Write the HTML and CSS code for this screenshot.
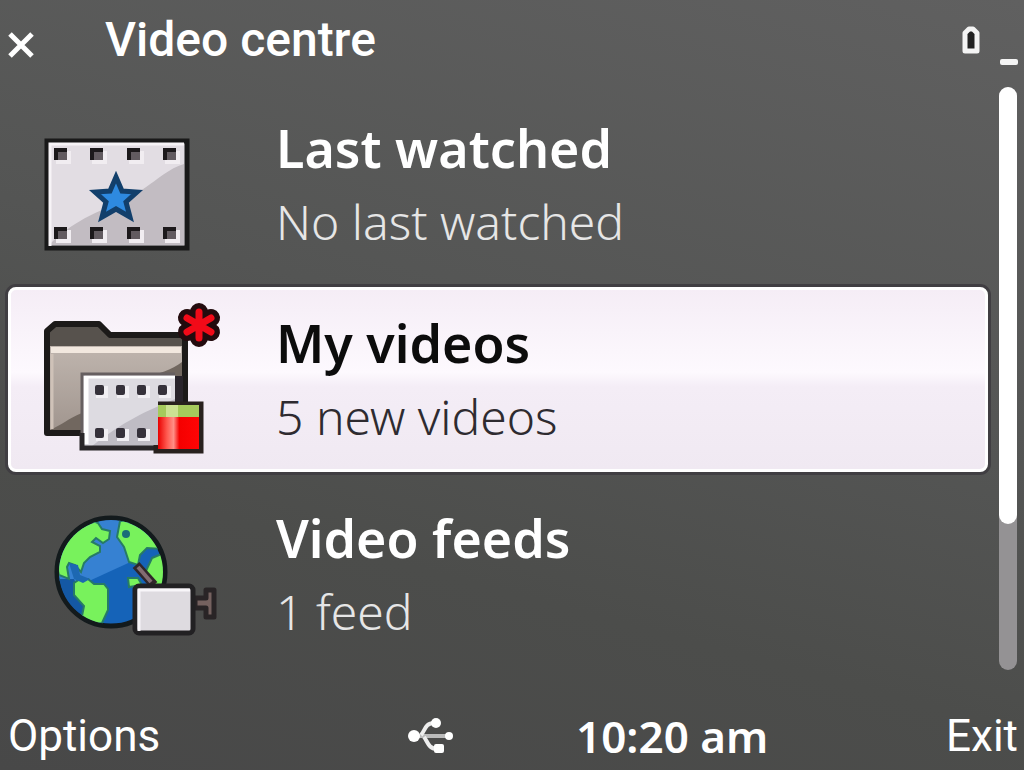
FILE: index.html
```html
<!DOCTYPE html>
<html lang="en">
<head>
  <meta charset="UTF-8" />
  <meta name="viewport" content="width=device-width, initial-scale=1.0"/>
  <title>Video centre</title>
  <link rel="stylesheet" href="styles.css">
</head>
<body>

<header class="title-bar">
  <button type="button" class="close" aria-label="Close">
    <svg width="28" height="28" viewBox="0 0 28 28"><path d="M3 3L25 25M25 3L3 25" stroke="#fff" stroke-width="5"/></svg>
  </button>
  <h1>Video centre</h1>
  <svg class="battery" width="18" height="28" viewBox="0 0 18 28">
    <path d="M7 3H11L15 7V25H3V7Z" fill="#222" stroke="#f4f4f4" stroke-width="5" stroke-linejoin="round"/>
  </svg>
  <span class="level"></span>
</header>

<main class="content">
  <nav class="list">
    <!-- Last watched -->
    <a href="#last-watched" class="item">
      <svg class="icon" viewBox="0 0 180 160">
        <rect x="3" y="36" width="140" height="107" fill="#e2dde3" stroke="#191919" stroke-width="5"/>
        <path d="M6 139C32 113 60 105 84 93S120 65 140 59V140H6Z" fill="#c2bcc2"/>
        <path d="M6 141V39H140" fill="none" stroke="#f7f4f7" stroke-width="3"/>
        <g fill="#f1edf1">
          <rect x="12" y="46" width="15" height="13"/><rect x="48" y="46" width="15" height="13"/>
          <rect x="85" y="46" width="15" height="13"/><rect x="121" y="46" width="15" height="13"/>
          <rect x="12" y="125" width="15" height="13"/><rect x="48" y="125" width="15" height="13"/>
          <rect x="85" y="125" width="15" height="13"/><rect x="121" y="125" width="15" height="13"/>
        </g>
        <g fill="#625b60">
          <rect x="10" y="43" width="13" height="12"/><rect x="46" y="43" width="13" height="12"/>
          <rect x="83" y="43" width="13" height="12"/><rect x="119" y="43" width="13" height="12"/>
          <rect x="10" y="122" width="13" height="12"/><rect x="46" y="122" width="13" height="12"/>
          <rect x="83" y="122" width="13" height="12"/><rect x="119" y="122" width="13" height="12"/>
        </g>
        <g fill="none" stroke="#1c191b" stroke-width="4">
          <path d="M12 55V45H23"/><path d="M48 55V45H59"/><path d="M85 55V45H96"/><path d="M121 55V45H132"/>
          <path d="M12 134V124H23"/><path d="M48 134V124H59"/><path d="M85 134V124H96"/><path d="M121 134V124H132"/>
        </g>
        <path d="M72 72L78 86L93 87L82 97L86 112L72 104L58 112L62 97L51 87L66 86Z" fill="#2e8ae0" stroke="#123f6b" stroke-width="5"/>
      </svg>
      <span class="text">
        <span class="name">Last watched</span>
        <span class="detail">No last watched</span>
      </span>
    </a>

    <!-- My videos -->
    <a href="#my-videos" class="item selected">
      <svg class="icon" viewBox="0 0 180 160">
        <defs>
          <linearGradient id="folder" x1="0" y1="0" x2="0" y2="1">
            <stop offset="0" stop-color="#bfb5ae"/><stop offset="1" stop-color="#a1968f"/>
          </linearGradient>
          <linearGradient id="can" x1="0" y1="0" x2="1" y2="0">
            <stop offset="0" stop-color="#e80000"/><stop offset=".22" stop-color="#ff5a50"/>
            <stop offset=".38" stop-color="#ff8f86"/><stop offset=".52" stop-color="#f50000"/>
            <stop offset="1" stop-color="#ff0505"/>
          </linearGradient>
        </defs>
        <path d="M3 133V31L11 24H55L66 35H141V133Z" fill="#57524d" stroke="#1c1a19" stroke-width="6" stroke-linejoin="round"/>
        <path d="M6 46H138V78L124 80V130H6Z" fill="url(#folder)"/>
        <path d="M6 130C16 126 25 118 38 113V130Z" fill="#71675f"/>
        <path d="M138 62C128 70 114 74 98 78H138Z" fill="#71675f"/>
        <path d="M7 50H137" stroke="#f2e8df" stroke-width="6"/>
        <path d="M8 54V129" stroke="#cfc2b8" stroke-width="3"/>
        <path d="M39 75H131V148H39Z" fill="#dddbe1"/>
        <path d="M48 146C80 121 102 111 131 99V146H48Z" fill="#bfbcc4"/>
        <path d="M42 76V144" stroke="#fff" stroke-width="5"/>
        <path d="M41 77H131" stroke="#fff" stroke-width="3"/>
        <path d="M38 146V74H131" fill="none" stroke="#665f60" stroke-width="3"/>
        <path d="M38 133V148H118" fill="none" stroke="#292628" stroke-width="5"/>
        <path d="M135 76V106" stroke="#29242b" stroke-width="8"/>
        <g fill="#f1eff3">
          <rect x="52" y="86" width="12" height="12"/><rect x="73" y="86" width="12" height="12"/>
          <rect x="94" y="86" width="12" height="12"/><rect x="115" y="86" width="12" height="12"/>
          <rect x="52" y="129" width="12" height="12"/><rect x="73" y="129" width="12" height="12"/>
          <rect x="94" y="129" width="12" height="12"/>
        </g>
        <g fill="#35313a">
          <rect x="51" y="85" width="9" height="10" rx="2"/><rect x="72" y="85" width="9" height="10" rx="2"/>
          <rect x="93" y="85" width="9" height="10" rx="2"/><rect x="114" y="85" width="9" height="10" rx="2"/>
          <rect x="51" y="128" width="9" height="10" rx="2"/><rect x="72" y="128" width="9" height="10" rx="2"/>
          <rect x="93" y="128" width="9" height="10" rx="2"/>
        </g>
        <path d="M114 104H157V151H112V145" fill="none" stroke="#28211e" stroke-width="5"/>
        <rect x="114" y="105" width="41" height="12" fill="#a5ca5c"/>
        <rect x="122" y="105" width="12" height="12" fill="#cbe292"/>
        <rect x="114" y="117" width="41" height="32" fill="url(#can)"/>
        <g fill="none" stroke-linecap="round">
          <path d="M155 12V38M143 18L167 32M167 18L143 32" stroke="#230b0e" stroke-width="18"/>
          <path d="M155 12V38M143 18L167 32M167 18L143 32" stroke="#f20a18" stroke-width="7"/>
        </g>
      </svg>
      <span class="text">
        <span class="name">My videos</span>
        <span class="detail">5 new videos</span>
      </span>
    </a>

    <!-- Video feeds -->
    <a href="#video-feeds" class="item">
      <svg class="icon" viewBox="0 0 180 160">
        <defs>
          <clipPath id="globe"><circle cx="67" cy="77" r="52"/></clipPath>
        </defs>
        <circle cx="67" cy="77" r="54" fill="#1563b8" stroke="#131a1c" stroke-width="5"/>
        <g clip-path="url(#globe)">
          <path d="M10 86H45L93 64L130 10H10Z" fill="#3681d2"/>
          <path d="M10 84H30L42 110L38 135H10Z" fill="#1458a4"/>
          <g fill="#78f25c" stroke="#277b65" stroke-width="2">
            <path d="M44 24L54 28L58 34L66 36L65 44L59 48L52 43L48 47L56 51V57L46 62L40 68L37 77L31 70L25 68L23 72L25 84L15 80L10 60L24 34Z"/>
            <path d="M30 88L36 84H44L50 89H60L64 94V115L58 128L46 129L38 121L40 111L30 100Z"/>
            <path d="M76 26H92L106 36L120 54L103 53L96 60L94 70L85 67L80 52L73 42Z"/>
            <path d="M108 63L120 58L122 84L117 95L107 88L101 78Z"/>
            <path d="M84 83H94L98 90L85 92Z"/>
          </g>
          <path d="M25 68L34 70L36 80L46 84L39 88L30 84Z" fill="#1d68b2"/>
          <circle cx="82" cy="39" r="4" fill="#1a6c78"/>
        </g>
        <path d="M92 70L110 90" stroke="#30262a" stroke-width="9"/>
        <path d="M94 72L107 87" stroke="#826c72" stroke-width="4"/>
        <path d="M151 103H162V95H170V122H162V113H151Z" fill="#75615f" stroke="#292426" stroke-width="5" stroke-linejoin="round"/>
        <rect x="91" y="91" width="58" height="47" rx="4" fill="#dedbe0" stroke="#222123" stroke-width="5"/>
        <path d="M95 136V95H146" fill="none" stroke="#f8f6f9" stroke-width="3"/>
      </svg>
      <span class="text">
        <span class="name">Video feeds</span>
        <span class="detail">1 feed</span>
      </span>
    </a>
  </nav>

  <div class="scrollbar"><div class="thumb"></div></div>
</main>

<footer class="softkeys">
  <button type="button" class="softkey">Options</button>
  <svg class="usb" width="46" height="36" viewBox="0 0 46 36" fill="none" stroke="#eee" stroke-width="4">
    <path d="M5 18H42" stroke="#bbb"/>
    <path d="M13 17C17 13 17 5 26 5M16 19C20 24 20 31 30 31"/>
    <g fill="#fff" stroke="none">
      <circle cx="6" cy="18" r="6"/><circle cx="41" cy="18" r="4"/>
      <circle cx="28" cy="5" r="5"/><rect x="26" y="26" width="10" height="9" rx="2"/>
    </g>
  </svg>
  <time class="clock" datetime="10:20">10:20 am</time>
  <button type="button" class="softkey exit">Exit</button>
</footer>

</body>
</html>
```
FILE: styles.css
```css
* {
  box-sizing: border-box;
}

body {
  margin: 0;
  min-height: 100vh;
  display: flex;
  flex-direction: column;
  font-family: 'Noto Sans', 'Open Sans', sans-serif;
  color: #fff;
  background: linear-gradient(195deg, #606060 0%, #545554 45%, #4c4d4b 70%, #484848 100%);
}

button {
  padding: 0;
  border: none;
  background: none;
  color: inherit;
  cursor: pointer;
}

svg {
  display: block;
}

.title-bar {
  height: 84px;
  display: flex;
  align-items: center;
  padding: 0 6px 4px 7px;
}

.close {
  padding-top: 10px;
}

h1 {
  flex: 1;
  margin: 0 0 0 70px;
  font-family: Roboto, 'Noto Sans', sans-serif;
  font-size: 48px;
  font-weight: 500;
  line-height: 60px;
}

.battery {
  margin-right: 20px;
}

.level {
  width: 18px;
  height: 6px;
  margin-top: 44px;
  border-radius: 2px;
  background: #f4f4f4;
}

.content {
  flex: 1;
  display: flex;
  gap: 11px;
  padding: 3px 7px 16px 8px;
}

.list {
  flex: 1;
  display: flex;
  flex-direction: column;
  gap: 10px;
  padding-top: 5px;
}

.item {
  height: 185px;
  display: flex;
  align-items: center;
  gap: 52px;
  padding-left: 36px;
  border-radius: 8px;
  color: #fff;
  text-decoration: none;
}

.icon {
  width: 180px;
  height: 160px;
}

.text {
  display: flex;
  flex-direction: column;
  gap: 10px;
}

.name {
  font-size: 52px;
  font-weight: 600;
  line-height: 64px;
}

.detail {
  font-size: 48px;
  font-weight: 300;
  line-height: 64px;
  color: #e6e6e6;
}

.selected {
  color: #0c0c0c;
  border: 3px solid #fff;
  padding-left: 33px;
  background: linear-gradient(#f5edf6 0%, #fdf9fe 46%, #f4edf6 54%, #f0e9f2 100%);
  box-shadow: 0 0 0 3px #403e42;
}

.selected .detail {
  color: #2e2b30;
}

.scrollbar {
  width: 18px;
  border-radius: 9px;
  background: #949294;
}

.thumb {
  height: 75%;
  border-radius: 9px;
  background: #fff;
}

.softkeys {
  height: 84px;
  display: grid;
  grid-template-columns: 400px 168px 1fr auto;
  align-items: center;
  padding: 16px 6px 0 8px;
}

.softkey {
  justify-self: start;
  font-family: Roboto, 'Noto Sans', sans-serif;
  font-size: 44px;
  line-height: 60px;
}

.clock {
  font-size: 44px;
  font-weight: 600;
  line-height: 60px;
}
```
